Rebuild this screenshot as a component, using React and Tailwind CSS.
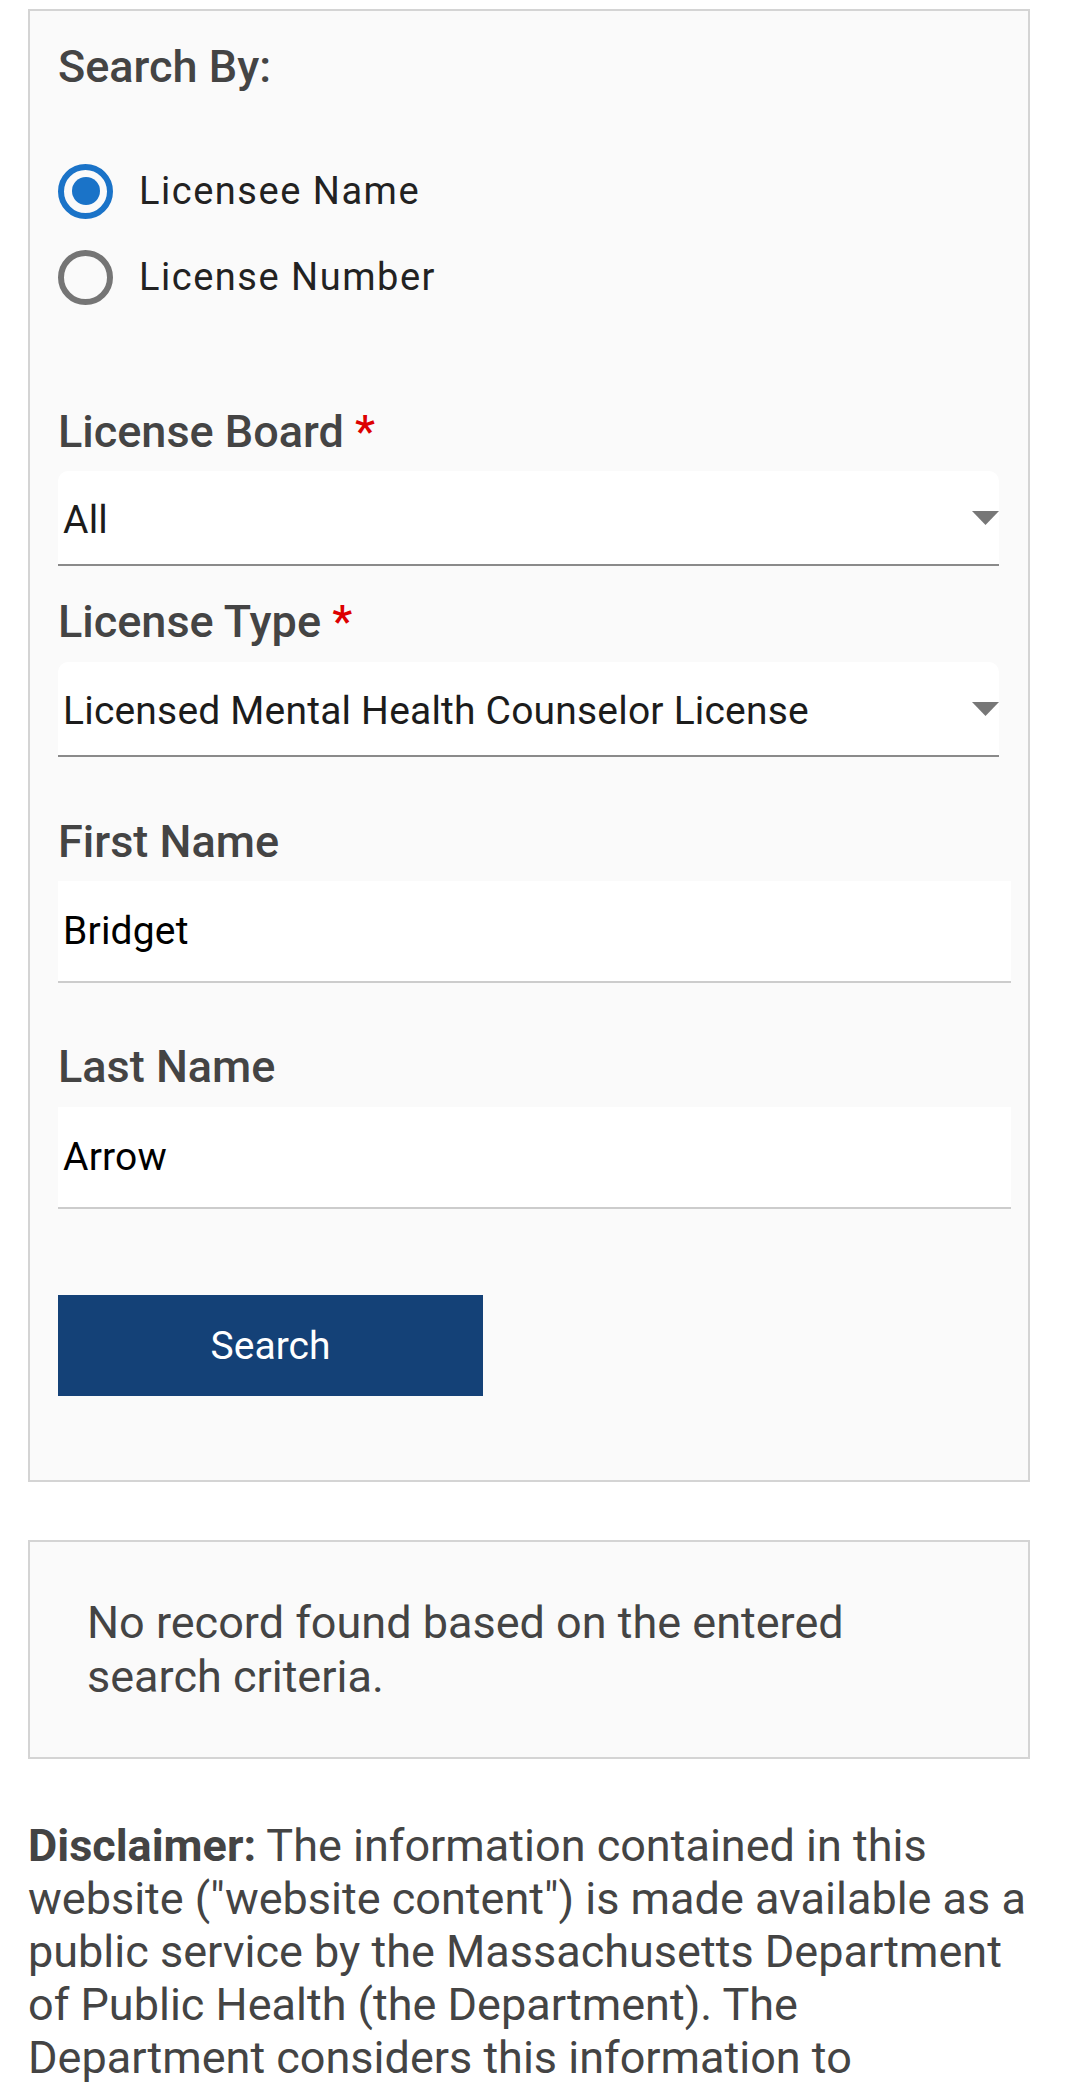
const labelCls = "text-[45px] leading-[54px] font-medium text-[#444444]";

const Radio = ({ checked, label }) => (
    <div className="h-[86px] flex items-center">
        {checked ? (
            <div className="w-[55px] h-[55px] rounded-full border-[6px] border-[#1a73c8] flex items-center justify-center">
                <div className="w-[28px] h-[28px] rounded-full bg-[#1a73c8]"></div>
            </div>
        ) : (
            <div className="w-[55px] h-[55px] rounded-full border-[6px] border-[#757575]"></div>
        )}
        <span className="ml-[26px] text-[38px] leading-[54px] tracking-[0.04em] text-[#222222]">{label}</span>
    </div>
);

const Required = ({ children }) => (
    <div className={labelCls}>
        {children} <span className="text-[#dd0000]">*</span>
    </div>
);

const SelectBox = ({ value, className }) => (
    <div className={"w-[941px] h-[95px] bg-white rounded-t-[10px] border-b-2 border-[#8a8a8a] flex items-center justify-between pl-[5px] pt-[5px] " + className}>
        <span className="text-[39px] leading-[54px] tracking-[0.005em] text-[#1c1c1c]">{value}</span>
        <svg width="27" height="14" viewBox="0 0 27 14" className="-mt-[5px]">
            <polygon points="0,0 27,0 13.5,14" fill="#777777" />
        </svg>
    </div>
);

const TextBox = ({ value, className }) => (
    <div className={"w-[953px] h-[102px] bg-white border-b-2 border-[#cccccc] flex items-center pl-[5px] " + className}>
        <span className="text-[39px] leading-[54px] tracking-[0.005em] text-black">{value}</span>
    </div>
);

const App = () => {
    return (
        <div className="min-h-screen bg-white px-[28px] pt-[9px] font-['Roboto',sans-serif]">
            <div className="w-[1002px] border-2 border-[#d4d4d4] bg-[#fafafa] pl-[28px] pt-[29px] pb-[84px]">
                <div className={labelCls}>Search By:</div>

                <div className="mt-[54px]">
                    <Radio checked label="Licensee Name" />
                    <Radio label="License Number" />
                </div>

                <div className="mt-[85px]">
                    <Required>License Board</Required>
                </div>
                <SelectBox value="All" className="mt-[12px]" />

                <div className="mt-[29px]">
                    <Required>License Type</Required>
                </div>
                <SelectBox value="Licensed Mental Health Counselor License" className="mt-[13px]" />

                <div className={"mt-[58px] " + labelCls}>First Name</div>
                <TextBox value="Bridget" className="mt-[12px]" />

                <div className={"mt-[57px] " + labelCls}>Last Name</div>
                <TextBox value="Arrow" className="mt-[13px]" />

                <button
                    type="button"
                    className="mt-[86px] w-[425px] h-[101px] bg-[#144177] text-white text-[39px] leading-[54px] flex items-center justify-center"
                >
                    Search
                </button>
            </div>

            <div className="mt-[58px] w-[1002px] border-2 border-[#d4d4d4] bg-[#fafafa] pl-[57px] pr-[70px] pt-[54px] pb-[53px]">
                <p className="text-[45px] leading-[54px] text-[#444444]">
                    No record found based on the entered search criteria.
                </p>
            </div>

            <p className="mt-[60px] w-[1002px] text-[45px] leading-[53px] text-[#444444] pb-[40px]">
                <span className="font-bold">Disclaimer:</span> The information contained in this
                website ("website content") is made available as a public service by the
                Massachusetts Department of Public Health (the Department). The Department
                considers this information to constitute public information; however, the
                Department does not warrant the completeness or accuracy of the website content.
            </p>
        </div>
    );
};

export default App;
